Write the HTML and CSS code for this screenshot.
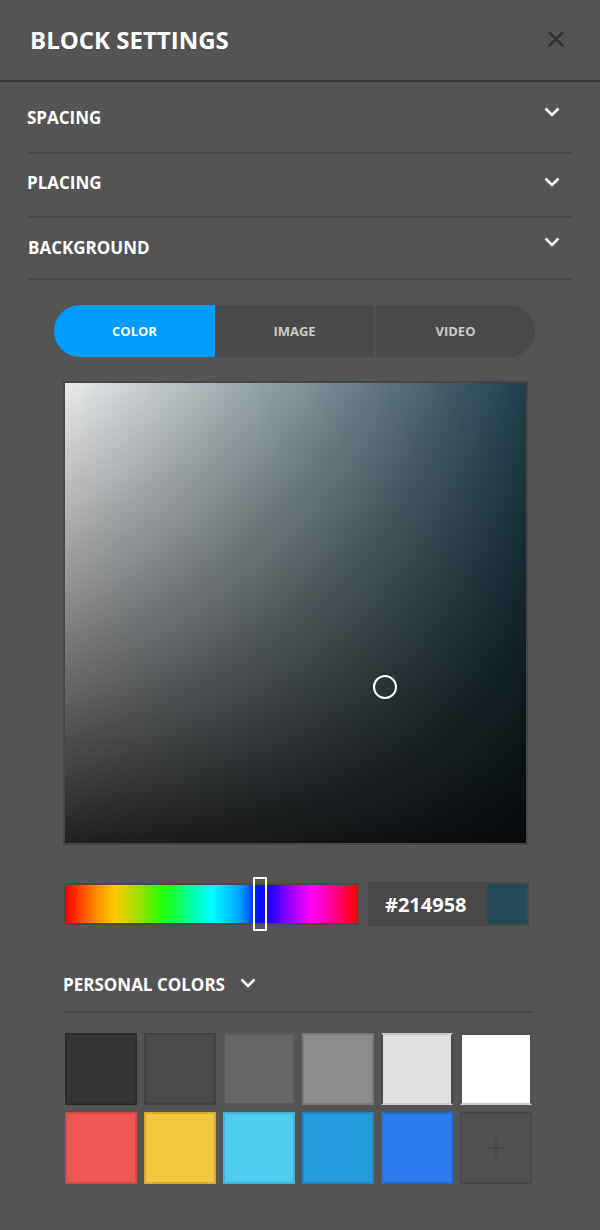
FILE: index.html
```html
<!DOCTYPE html>
<html>
<head>
<meta charset="utf-8">
<link rel="stylesheet" href="styles.css">
</head>
<body>
<div class="panel">
  <header class="head">
    <h1 class="title">BLOCK SETTINGS</h1>
    <svg class="close" width="20" height="20" viewBox="0 0 20 20"><path d="M3 3 L17 17 M17 3 L3 17" stroke="#333" stroke-width="2.6" fill="none"/></svg>
  </header>
  <div class="acc">
    <div class="acc-row first"><span>SPACING</span><svg class="chev up" width="16" height="10" viewBox="0 0 16 10"><path d="M1.5 1.5 L8 8 L14.5 1.5" stroke="#fff" stroke-width="2.6" fill="none"/></svg></div>
    <div class="acc-row"><span>PLACING</span><svg class="chev" width="16" height="10" viewBox="0 0 16 10"><path d="M1.5 1.5 L8 8 L14.5 1.5" stroke="#fff" stroke-width="2.6" fill="none"/></svg></div>
    <div class="acc-row last"><span>BACKGROUND</span><svg class="chev up" width="16" height="10" viewBox="0 0 16 10"><path d="M1.5 1.5 L8 8 L14.5 1.5" stroke="#fff" stroke-width="2.6" fill="none"/></svg></div>
  </div>
  <div class="bg-body">
    <div class="tabs">
      <div class="tab active">COLOR</div>
      <div class="tab">IMAGE</div>
      <div class="tab">VIDEO</div>
    </div>
    <div class="sv">
      <div class="sv-marker"></div>
    </div>
    <div class="hue-row">
      <div class="hue">
        <div class="hue-handle"></div>
      </div>
      <div class="hex">
        <span class="hex-text">#214958</span>
        <span class="hex-swatch"></span>
      </div>
    </div>
    <div class="personal">
      <span>PERSONAL COLORS</span>
      <svg class="chev" width="16" height="10" viewBox="0 0 16 10"><path d="M1.5 1.5 L8 8 L14.5 1.5" stroke="#fff" stroke-width="2.6" fill="none"/></svg>
    </div>
    <div class="swatches">
      <div class="sw c1"></div>
      <div class="sw c2"></div>
      <div class="sw c3"></div>
      <div class="sw c4"></div>
      <div class="sw c5"></div>
      <div class="sw c6"></div>
      <div class="sw c7"></div>
      <div class="sw c8"></div>
      <div class="sw c9"></div>
      <div class="sw c10"></div>
      <div class="sw c11"></div>
      <div class="sw add"><svg width="22" height="22" viewBox="0 0 22 22"><path d="M11 1 V21 M1 11 H21" stroke="#464646" stroke-width="1.4" fill="none"/></svg></div>
    </div>
  </div>
</div>
</body>
</html>
```

FILE: styles.css
```css
* { box-sizing: border-box; }
html, body { margin: 0; padding: 0; }
body {
  background: #545454;
  font-family: "Open Sans", "DejaVu Sans", sans-serif;
  color: #fff;
  width: 600px;
  height: 1230px;
  overflow: hidden;
}
.panel { width: 600px; }
.head {
  height: 82px;
  display: flex;
  align-items: center;
  justify-content: space-between;
  padding: 0 34px 0 30px;
  border-bottom: 2px solid #393939;
}
.title {
  margin: 0;
  font-size: 24px;
  font-weight: 700;
  letter-spacing: 0;
  padding-bottom: 1px;
}
.close { margin-bottom: 3px; }
.acc { margin: 0 28px 0 27px; }
.acc-row {
  height: 64px;
  display: flex;
  align-items: center;
  justify-content: space-between;
  padding: 0 12px 6px 0;
  border-bottom: 2px solid #474747;
  font-size: 17px;
  font-weight: 700;
}
.acc-row.first { height: 72px; padding-bottom: 0; }
.acc-row.last { height: 62px; padding-bottom: 2px; padding-left: 1px; }
.chev.up { margin-top: -10px; }
.bg-body {
  padding: 25px 65px 0 63px;
}
.tabs {
  display: flex;
  height: 52px;
  margin-left: -9px;
  margin-right: 0;
  border-radius: 26px;
  overflow: hidden;
  background: #4a4a4a;
}
.tab {
  flex: 1;
  display: flex;
  align-items: center;
  justify-content: center;
  font-size: 13px;
  font-weight: 700;
  color: #c9c9c9;
}
.tab.active { background: #009cff; color: #fff; flex: 0 0 161px; }
.tab + .tab + .tab { border-left: 2px solid #545454; }
.sv {
  position: relative;
  margin-top: 24px;
  width: 465px;
  height: 464px;
  border: 2px solid #464646;
  background:
    linear-gradient(to bottom, rgba(0,0,0,0) 0%, rgba(0,0,0,0.86) 100%),
    linear-gradient(to right, #e9eaeb 0%, #1f3f4b 100%);
}
.sv-marker {
  position: absolute;
  left: 308px;
  top: 292px;
  width: 24px;
  height: 24px;
  border: 2px solid #fff;
  border-radius: 50%;
}
.hue-row {
  display: flex;
  align-items: center;
  gap: 9px;
  margin-top: 37px;
}
.hue {
  position: relative;
  width: 295px;
  height: 42px;
  margin-left: 1px;
  border: 2px solid #4b4848;
  background: linear-gradient(to right, #ff0000 0%, #ff8a00 10%, #ffcc00 17%, #9ee000 25%, #22ff00 33%, #00ffb0 44%, #00ffff 50%, #00a0ff 60%, #0010ff 66%, #2200ff 70%, #9900ff 77%, #ff00ff 84%, #ff0090 92%, #ff0000 100%);
}
.hue-handle {
  position: absolute;
  left: 187px;
  top: -8px;
  width: 14px;
  height: 54px;
  border: 2px solid #fff;
}
.hex {
  width: 161px;
  height: 44px;
  background: #484848;
  display: flex;
  align-items: center;
  justify-content: space-between;
  padding: 2px;
  padding-left: 17px;
}
.hex-text { font-size: 20px; font-weight: 700; color: #fff; }
.hex-swatch { width: 40px; height: 40px; background: #234b5a; }
.personal {
  display: flex;
  align-items: center;
  gap: 15px;
  height: 56px;
  margin-top: 31px;
  padding-bottom: 0;
  margin-left: 0;
  margin-right: 1px;
  border-bottom: 2px solid #474747;
  font-size: 17px;
  font-weight: 700;
}
.personal .chev { margin-top: -2px; }
.swatches {
  display: grid;
  grid-template-columns: repeat(6, 72px);
  grid-auto-rows: 72px;
  gap: 7px;
  margin-top: 20px;
  margin-left: 2px;
}
.sw { border: 2px solid rgba(0,0,0,0.13); }
.c1 { background: #333333; }
.c2 { background: #4b4b4b; }
.c3 { background: #686565; }
.c4 { background: #8c8c8c; }
.c5 { background: #e0e0e0; border-color: #c9c9c9 #4a4a4a #c9c9c9 #4a4a4a; }
.c6 { background: #ffffff; border-color: #4f4f4f #505050 #c8c8c8 #505050; }
.c7 { background: #ef5755; }
.c8 { background: #f2c940; }
.c9 { background: #4ecdf3; }
.c10 { background: #239bdd; }
.c11 { background: #2a7cef; }
.add {
  background: #515151;
  border-color: #474747;
  display: flex;
  align-items: center;
  justify-content: center;
}
```
